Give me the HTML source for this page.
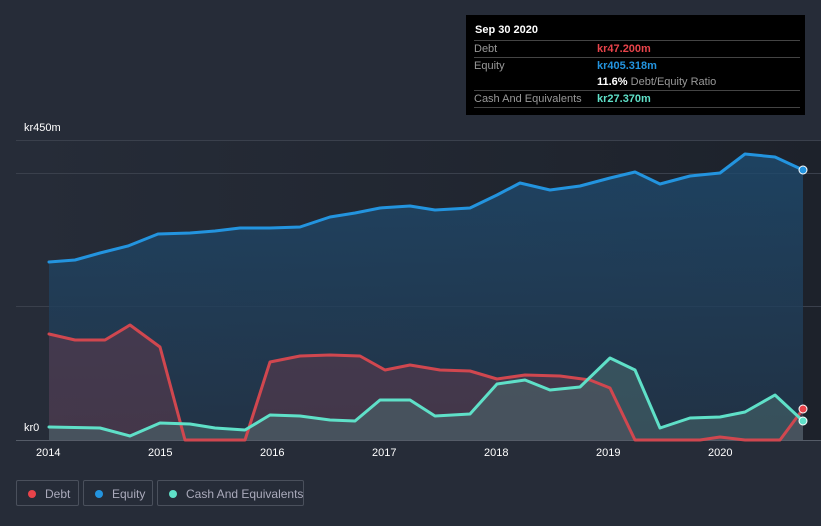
<!DOCTYPE html>
<html><head><meta charset="utf-8"><style>
body{margin:0;width:821px;height:526px;background:#262c38;font-family:"Liberation Sans",sans-serif;overflow:hidden;position:relative}
.tt{position:absolute;left:466px;top:15px;width:339px;height:100px;background:#000;font-size:11px;color:#999}
.row{position:absolute;left:8px;right:5px;border-top:1px solid #444;height:16px;line-height:16px}
.lbl{position:absolute;font-size:11px;color:#fff}
.leg{position:absolute;top:480px;height:26px;border:1px solid #4a505c;border-radius:2px;color:#aab;font-size:12px;line-height:26px;box-sizing:border-box;padding-left:28px;white-space:nowrap;overflow:hidden}
.leg i{position:absolute;left:11px;top:9px;width:8px;height:8px;border-radius:50%}
</style></head><body>
<svg width="821" height="526" style="position:absolute;left:0;top:0">
<defs><linearGradient id="bg" x1="0" x2="1"><stop offset="0" stop-color="#262c38"/><stop offset="1" stop-color="#1d222b"/></linearGradient>
<linearGradient id="eq" x1="0" y1="0" x2="0" y2="1"><stop offset="0" stop-color="#1e4a6e" stop-opacity=".8"/><stop offset="1" stop-color="#22354a" stop-opacity=".8"/></linearGradient></defs>
<rect x="16" y="140" width="805" height="300" fill="url(#bg)"/>
<g stroke="#3a404c" stroke-width="1"><line x1="16" y1="140.5" x2="821" y2="140.5"/><line x1="16" y1="173.5" x2="821" y2="173.5"/><line x1="16" y1="306.5" x2="821" y2="306.5"/><line x1="16" y1="440.5" x2="821" y2="440.5" stroke="#555c68"/></g>
<polygon fill="url(#eq)" points="49,440 49,262 75,260 100,253 128,246 158,234 190,233 215,231 240,228 270,228 300,227 330,217 355,213 380,208 410,206 435,210 470,208 497,195 520,183 550,190 580,186 610,178 635,172 660,184 690,176 720,173 745,154 775,157 803,170 803,440"/>
<polygon fill="#5a3a4c" fill-opacity=".6" points="49,440 49,334 75,340 105,340 130,325 160,347 185,440 245,440 270,362 300,356 330,355 360,356 385,370 410,365 440,370 470,371 497,379 525,375 560,376 590,380 610,388 635,440 700,440 720,437 745,440 780,440 803,409 803,440"/>
<polygon fill="#4a6a6e" fill-opacity=".55" points="49,440 49,427 100,428 130,436 160,423 190,424 215,428 245,430 270,415 300,416 330,420 355,421 380,400 410,400 435,416 470,414 497,384 525,380 550,390 580,387 610,358 635,370 660,428 690,418 720,417 745,412 775,395 803,421 803,440"/>
<g fill="none" stroke-width="3" stroke-linejoin="round" stroke-linecap="round">
<polyline stroke="#2394df" points="49,262 75,260 100,253 128,246 158,234 190,233 215,231 240,228 270,228 300,227 330,217 355,213 380,208 410,206 435,210 470,208 497,195 520,183 550,190 580,186 610,178 635,172 660,184 690,176 720,173 745,154 775,157 803,170"/>
<polyline stroke="#d0474f" points="49,334 75,340 105,340 130,325 160,347 185,440 245,440 270,362 300,356 330,355 360,356 385,370 410,365 440,370 470,371 497,379 525,375 560,376 590,380 610,388 635,440 700,440 720,437 745,440 780,440 803,409"/>
<polyline stroke="#5fe0c8" points="49,427 100,428 130,436 160,423 190,424 215,428 245,430 270,415 300,416 330,420 355,421 380,400 410,400 435,416 470,414 497,384 525,380 550,390 580,387 610,358 635,370 660,428 690,418 720,417 745,412 775,395 803,421"/>
</g>
<circle cx="803" cy="170" r="4" fill="#2394df" stroke="#fff" stroke-width="1"/>
<circle cx="803" cy="409" r="4" fill="#e8434a" stroke="#fff" stroke-width="1"/>
<circle cx="803" cy="421" r="4" fill="#5fe0c8" stroke="#fff" stroke-width="1"/>
</svg>
<div class="lbl" style="left:24px;top:122px">kr450m</div>
<div class="lbl" style="left:24px;top:422px">kr0</div>
<div class="lbl" style="left:36px;top:447px">2014</div>
<div class="lbl" style="left:148px;top:447px">2015</div>
<div class="lbl" style="left:260px;top:447px">2016</div>
<div class="lbl" style="left:372px;top:447px">2017</div>
<div class="lbl" style="left:484px;top:447px">2018</div>
<div class="lbl" style="left:596px;top:447px">2019</div>
<div class="lbl" style="left:708px;top:447px">2020</div>
<div class="tt">
<div style="position:absolute;left:9px;top:9px;color:#fff;font-weight:bold">Sep 30 2020</div>
<div class="row" style="top:25px">Debt<span style="position:absolute;left:123px;color:#e8434a;font-weight:bold">kr47.200m</span></div>
<div class="row" style="top:42px">Equity<span style="position:absolute;left:123px;color:#2394df;font-weight:bold">kr405.318m</span></div>
<div style="position:absolute;left:131px;top:59px;line-height:16px"><b style="color:#fff">11.6%</b> Debt/Equity Ratio</div>
<div class="row" style="top:75px">Cash And Equivalents<span style="position:absolute;left:123px;color:#5fe0c8;font-weight:bold">kr27.370m</span></div>
<div class="row" style="top:92px;height:0"></div>
</div>
<div class="leg" style="left:16px;width:63px"><i style="background:#e8434a"></i>Debt</div>
<div class="leg" style="left:83px;width:70px"><i style="background:#2394df"></i>Equity</div>
<div class="leg" style="left:157px;width:147px"><i style="background:#5fe0c8"></i>Cash And Equivalents</div>
</body></html>
